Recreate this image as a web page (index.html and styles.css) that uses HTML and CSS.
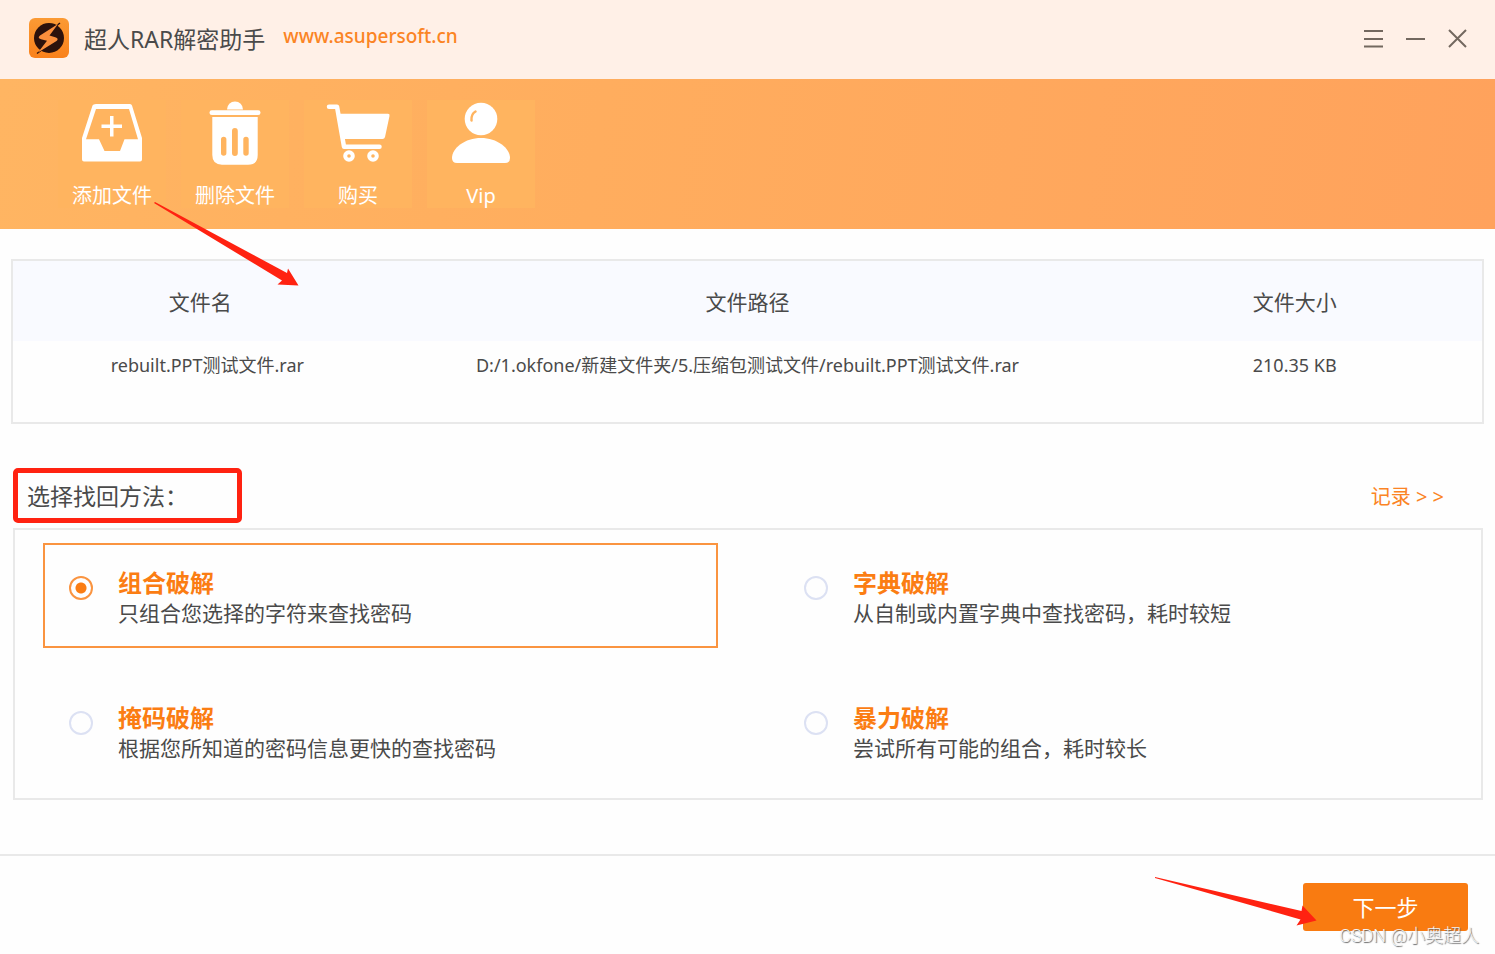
FILE: index.html
```html
<!DOCTYPE html>
<html lang="zh-CN">
<head>
<meta charset="utf-8">
<title>超人RAR解密助手</title>
<link rel="stylesheet" href="styles.css">
</head>
<body>
<header class="titlebar">
  <svg class="logo" viewBox="0 0 40 40" aria-hidden="true">
    <defs><linearGradient id="lg" x1="0" y1="0" x2="0" y2="1"><stop offset="0" stop-color="#fb9a34"/><stop offset="1" stop-color="#f9811b"/></linearGradient></defs>
    <rect width="40" height="40" rx="6" fill="url(#lg)"/>
    <circle cx="20" cy="20" r="15" fill="#2c120c"/>
    <path d="M26 9L31 5M14 31L8 35.500" stroke="#2c120c" stroke-width="1.500"/>
    <path d="M29 6L11 17.500q-3 2.500 1 3.800l6 1.500L9 34.500 27.500 23q2.500-2.300-.5-3.500l-6.500-2z" fill="#fb8f3c"/>
  </svg>
  <h1 class="app-name">超人RAR解密助手</h1>
  <a class="site-link" href="#">www.asupersoft.cn</a>
  <div class="window-controls">
    <button class="window-button" type="button" aria-label="菜单"><svg class="window-icon" viewBox="0 0 20 20"><path d="M0 2h19M0 10h19M0 17.500h19"/></svg></button>
    <button class="window-button" type="button" aria-label="最小化"><svg class="window-icon" viewBox="0 0 20 20"><path d="M0 10h19"/></svg></button>
    <button class="window-button" type="button" aria-label="关闭"><svg class="window-icon" viewBox="0 0 20 20"><path d="M1 1l17 17M18 1L1 18"/></svg></button>
  </div>
</header>

<nav class="toolbar">
  <button class="tool" type="button">
    <svg class="tool-icon" viewBox="0 0 72 68"><path fill-rule="evenodd" d="M20 4h34q1.500 0 2 1.500L66 38v21.500q0 2-2 2H8q-2 0-2-2V38L16.500 5.500Q17 4 20 4zM20 9L10 39.300H23L28.500 51H44L48.500 39.300H62L53 9z"/><path d="M34 16h3.500v8.500H46V28h-8.500v8.500H34V28h-8.500v-3.500H34z"/></svg>
    添加文件
  </button>
  <button class="tool" type="button">
    <svg class="tool-icon" viewBox="0 0 72 68"><path d="M28 9.500a8 8 0 0 1 16 0z"/><rect x="10.500" y="10.300" width="51" height="4.700" rx="2.300"/><path fill-rule="evenodd" d="M13.300 17h45.400v38q0 9.700-9.700 9.700H23q-9.700 0-9.700-9.700zM22 39.500v13.500a2.700 2.700 0 0 0 5.400 0V39.500a2.700 2.700 0 0 0-5.400 0zM33 31v22a2.900 2.900 0 0 0 5.800 0V31a2.900 2.900 0 0 0-5.800 0zM44.300 39.500v13.500a2.700 2.700 0 0 0 5.400 0V39.500a2.700 2.700 0 0 0-5.400 0z"/></svg>
    删除文件
  </button>
  <button class="tool" type="button">
    <svg class="tool-icon" viewBox="0 0 72 68"><path d="M7 6.700h8l7 40h35.500" fill="none" stroke="#fff" stroke-width="4.500" stroke-linecap="round" stroke-linejoin="round"/><path d="M16.500 13.700H66q2 0 1.500 2.300l-4.500 21q-.5 2-2.500 2H20z"/><circle cx="27" cy="56" r="3.800" fill="none" stroke="#fff" stroke-width="4"/><circle cx="51" cy="56" r="3.800" fill="none" stroke="#fff" stroke-width="4"/></svg>
    购买
  </button>
  <button class="tool" type="button">
    <svg class="tool-icon" viewBox="0 0 72 68"><circle cx="36" cy="19" r="16.300"/><path d="M26.500 20.500q-.5-6.500 4-9" fill="none" stroke="#ffb45f" stroke-width="2.500" stroke-linecap="round"/><path d="M36 38c16 0 29 10 29 20q0 5-5 5H12q-5 0-5-5c0-10 13-20 29-20z"/></svg>
    Vip
  </button>
  <svg class="arrow arrow-files" viewBox="0 0 146 86" aria-hidden="true"><path d="M1 0L133 71l1-4.500L144.500 83.500 123.500 82.500l4.500-4L0 1z"/></svg>
</nav>

<main class="content">
  <div class="files">
    <table class="file-table">
      <thead><tr><th class="col-name">文件名</th><th class="col-path">文件路径</th><th class="col-size">文件大小</th></tr></thead>
      <tbody><tr><td class="cell-name">rebuilt.PPT测试文件.rar</td><td>D:/1.okfone/新建文件夹/5.压缩包测试文件/rebuilt.PPT测试文件.rar</td><td>210.35 KB</td></tr></tbody>
    </table>
  </div>

  <div class="method-head">
    <h2 class="method-title" id="method-title">选择找回方法：</h2>
    <a class="records" href="#">记录 &gt; &gt;</a>
  </div>

  <div class="methods" role="radiogroup" aria-labelledby="method-title">
    <label class="method"><input class="radio" type="radio" name="method" checked><span class="method-text"><strong class="method-name">组合破解</strong><span class="method-desc">只组合您选择的字符来查找密码</span></span></label>
    <label class="method"><input class="radio" type="radio" name="method"><span class="method-text"><strong class="method-name">字典破解</strong><span class="method-desc">从自制或内置字典中查找密码，耗时较短</span></span></label>
    <label class="method"><input class="radio" type="radio" name="method"><span class="method-text"><strong class="method-name">掩码破解</strong><span class="method-desc">根据您所知道的密码信息更快的查找密码</span></span></label>
    <label class="method"><input class="radio" type="radio" name="method"><span class="method-text"><strong class="method-name">暴力破解</strong><span class="method-desc">尝试所有可能的组合，耗时较长</span></span></label>
  </div>
</main>

<footer class="footer">
  <button class="next" type="button">下一步</button>
  <svg class="arrow arrow-next" viewBox="0 0 164 50" aria-hidden="true"><path d="M0 0L146.500 34l1-5.500L161.500 43.500 141.500 48.500l4-6L0 1z"/></svg>
  <span class="watermark">CSDN @小奥超人</span>
</footer>
</body>
</html>
```

FILE: styles.css
```css
* { box-sizing: border-box; }

body {
  margin: 0;
  min-height: 100vh;
  display: flex;
  flex-direction: column;
  background: #fefefe;
  color: #4a4a4a;
  font-family: "Noto Sans", "Noto Sans CJK SC", sans-serif;
  font-size: 18px;
}

button { border: 0; padding: 0; background: none; font: inherit; color: inherit; }
h1, h2 { margin: 0; font-weight: 400; }
a { text-decoration: none; }

.titlebar {
  display: flex;
  align-items: flex-start;
  padding: 18px 27px 0 29px;
  min-height: 79px;
  background: #fff0e7;
}
.logo { width: 40px; height: 40px; }
.app-name { margin-left: 15px; font-size: 23px; line-height: 42px; }
.site-link {
  margin: 4px 0 0 18px;
  color: #fb8424;
  font-size: 19px;
  font-weight: 500;
  line-height: 28px;
}
.window-controls { display: flex; gap: 22px; margin: 11px 0 0 auto; }
.window-button { display: flex; }
.window-icon { width: 20px; height: 20px; fill: none; stroke: #73685f; stroke-width: 2; }

.toolbar {
  position: relative;
  display: flex;
  gap: 15px;
  padding: 21px 58px;
  background: linear-gradient(98deg, #ffb562 0%, #ffad5e 40%, #ffa25c 100%);
}
.tool {
  display: flex;
  flex-direction: column;
  align-items: center;
  width: 108px;
  background: #ffb45f;
  color: #fff;
  font-size: 20px;
  line-height: 24px;
}
.tool-icon { width: 72px; height: 68px; margin-bottom: 16px; fill: #fff; }

.arrow { position: absolute; fill: #ff2211; pointer-events: none; }
.arrow-files { left: 154px; top: 123px; width: 146px; height: 86px; }
.arrow-next { right: 176px; top: 21px; width: 164px; height: 50px; }

.content { padding: 30px 11px 54px; }

.files { min-height: 165px; border: 2px solid #e9e9e9; }
.file-table { width: 100%; border-collapse: collapse; table-layout: fixed; }
.file-table th { padding: 0; height: 80px; background: #f9faff; font-size: 21px; font-weight: 400; }
.file-table td { padding: 0; height: 48px; text-align: center; white-space: nowrap; line-height: 24px; }
.file-table .cell-name { padding-left: 14px; }
.col-name { width: 25.5%; }
.col-path { width: 49%; }
.col-size { width: 25.5%; }

.method-head {
  display: flex;
  justify-content: space-between;
  align-items: center;
  padding: 0 40px 0 2px;
  margin: 44px 0 5px;
}
.method-title {
  width: 229px;
  padding: 6px 9px 5px;
  border: 5px solid #ff2211;
  border-radius: 5px;
  font-size: 23px;
  line-height: 34px;
  white-space: nowrap;
}
.records { color: #fb8424; font-size: 20px; }

.methods {
  display: grid;
  grid-template-columns: 1fr 1fr;
  gap: 30px 60px;
  margin: 0 1px 0 2px;
  padding: 13px 28px 15px;
  border: 2px solid #e9e9e9;
}
.method {
  display: flex;
  gap: 25px;
  padding: 23px 24px 18px;
  border: 2px solid transparent;
}
.method:has(:checked) { border-color: #fa9440; }
.radio {
  appearance: none;
  width: 24px;
  height: 24px;
  margin: 8px 0 0;
  flex: none;
  border: 2px solid #dce1f3;
  border-radius: 50%;
}
.radio:checked {
  border-color: #fa9440;
  background: radial-gradient(circle, #fb7d13 5px, transparent 6px);
}
.method-text { display: flex; flex-direction: column; line-height: 30px; }
.method-name { color: #fb7d13; font-size: 24px; }
.method-desc { font-size: 21px; }

.footer {
  position: relative;
  flex: 1;
  display: flex;
  justify-content: flex-end;
  align-items: flex-start;
  padding: 27px 27px 0;
  border-top: 2px solid #e9e9e9;
}
.next {
  width: 165px;
  height: 48px;
  padding-bottom: 2px;
  border-radius: 3px;
  background: #f97b11;
  color: #fff;
  font-size: 22px;
}
.watermark {
  position: absolute;
  right: 16px;
  top: 68px;
  color: #f4f4f4;
  font-family: Roboto, "Noto Sans CJK SC", sans-serif;
  font-size: 18px;
  font-weight: 300;
  line-height: 24px;
  text-shadow: 1px 1px 1px #666;
}
```
